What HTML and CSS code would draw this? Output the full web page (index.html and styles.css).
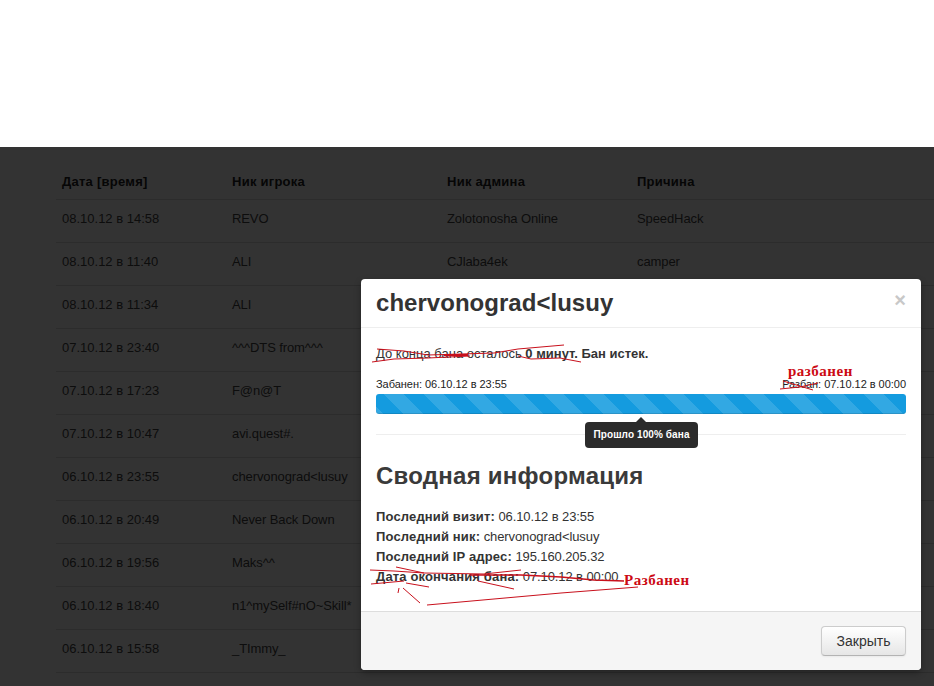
FILE: index.html
```html
<!DOCTYPE html>
<html lang="ru">
<head>
<meta charset="utf-8">
<title>Баны</title>
<link rel="stylesheet" href="styles.css">
</head>
<body>
<div class="top"></div>
<div class="wrap">
<table class="bans">
<thead><tr><th class="c1">Дата [время]</th><th class="c2">Ник игрока</th><th class="c3">Ник админа</th><th>Причина</th></tr></thead>
<tbody>
<tr><td>08.10.12 в 14:58</td><td>REVO</td><td>Zolotonosha Online</td><td>SpeedHack</td></tr>
<tr><td>08.10.12 в 11:40</td><td>ALI</td><td>CJlaba4ek</td><td>camper</td></tr>
<tr><td>08.10.12 в 11:34</td><td>ALI</td><td></td><td></td></tr>
<tr><td>07.10.12 в 23:40</td><td>^^^DTS from^^^</td><td></td><td></td></tr>
<tr><td>07.10.12 в 17:23</td><td>F@n@T</td><td></td><td></td></tr>
<tr><td>07.10.12 в 10:47</td><td>avi.quest#.</td><td></td><td></td></tr>
<tr><td>06.10.12 в 23:55</td><td>chervonograd&lt;lusuy</td><td></td><td></td></tr>
<tr><td>06.10.12 в 20:49</td><td>Never Back Down</td><td></td><td></td></tr>
<tr><td>06.10.12 в 19:56</td><td>Maks^^</td><td></td><td></td></tr>
<tr><td>06.10.12 в 18:40</td><td>n1^mySelf#nO~Skill*</td><td></td><td></td></tr>
<tr><td>06.10.12 в 15:58</td><td>_TImmy_</td><td></td><td></td></tr>
</tbody>
</table>
</div>
<div class="backdrop"></div>
<div class="modal">
  <div class="modal-head"><h3>chervonograd&lt;lusuy</h3><span class="close">×</span></div>
  <div class="modal-body">
    <p class="status">До конца бана осталось <b>0 минут. Бан истек.</b></p>
    <div class="dates"><span>Забанен: 06.10.12 в 23:55</span><span>Разбан: 07.10.12 в 00:00</span></div>
    <div class="progress"></div>
    <div class="tip">Прошло 100% бана</div>
    <hr class="rule">
    <h2>Сводная информация</h2>
    <p class="info"><b>Последний визит:</b> 06.10.12 в 23:55</p>
    <p class="info"><b>Последний ник:</b> chervonograd&lt;lusuy</p>
    <p class="info"><b>Последний IP адрес:</b> 195.160.205.32</p>
    <p class="info"><b>Дата окончания бана:</b> 07.10.12 в 00:00</p>
  </div>
  <div class="modal-foot"><button class="btn">Закрыть</button></div>
</div>
<svg class="scribble" width="934" height="686" viewBox="0 0 934 686" fill="none" stroke="#c8101c" stroke-width="1">
  <path d="M377 349 L404 351 L428 355 L494 353 L518 349 L564 345"/>
  <path d="M372 362 L394 359 L428 358 L470 356"/>
  <path d="M518 356 L531 359 L560 358 L581 362"/>
  <path d="M444 355 L468 355" stroke-width="2"/>
  <path d="M783 381 L813 390 M780 389 L800 387 L818 383"/>
  <path d="M370 570 L394 571 L424 573 L484 574 L521 570"/>
  <path d="M396 567 L424 573"/>
  <path d="M470 575 L521 575 L561 577 L594 580 L624 581" stroke-width="1.5"/>
  <path d="M478 581 L514 589"/>
  <path d="M371 584 L404 581 M406 583 L429 587"/>
  <path d="M398 593 L399 588 M403 588 L420 603"/>
  <path d="M427 605 L561 593 L638 587"/>
</svg>
<div class="note note-a">разбанен</div>
<div class="note note-b">Разбанен</div>
</body>
</html>
```
FILE: styles.css
```css
* { box-sizing: border-box; }
html, body { margin: 0; padding: 0; }
body { width: 934px; height: 686px; overflow: hidden; background: #fff; font-family: "Liberation Sans", Arial, sans-serif; font-size: 13px; color: #333; position: relative; }
.top { height: 147px; }
.wrap { padding: 13px 0 0 56px; }
.bans { border-collapse: collapse; width: 878px; table-layout: fixed; }
.bans th, .bans td { text-align: left; padding: 0 6px; border-bottom: 1px solid #ddd; }
.bans th { height: 39px; padding-top: 4px; font-weight: bold; letter-spacing: .25px; color: #222; }
.bans td { height: 43px; padding-bottom: 4px; color: #444; }
.bans td + td { letter-spacing: -.1px; }
.c1 { width: 170px; }
.c2 { width: 215px; }
.c3 { width: 190px; }
.backdrop { position: absolute; inset: 147px 0 0 0; background: rgba(0,0,0,.8); }
.modal { position: absolute; left: 361px; top: 279px; width: 560px; height: 391px; background: #fff; border-radius: 4px; display: flex; flex-direction: column; box-shadow: 0 3px 7px rgba(0,0,0,.3); }
.modal-head { height: 49px; padding: 9px 15px 0; border-bottom: 1px solid #eee; display: flex; justify-content: space-between; }
.modal-head h3 { margin: 0; font-size: 24px; line-height: 30px; font-weight: bold; letter-spacing: .03px; color: #333; }
.close { font-size: 20px; font-weight: bold; line-height: 24px; color: #c8c8c8; }
.modal-body { flex: 1; padding: 16px 15px 0; position: relative; }
.status { margin: 0; line-height: 20px; }
.dates { display: flex; justify-content: space-between; font-size: 11px; line-height: 14px; margin-top: 13px; color: #222; letter-spacing: -.03px; }
.progress { height: 20px; margin-top: 3px; border-radius: 3px; background-color: #149bdf; background-image: linear-gradient(45deg, rgba(255,255,255,.13) 25%, transparent 25%, transparent 50%, rgba(255,255,255,.13) 50%, rgba(255,255,255,.13) 75%, transparent 75%); background-size: 40px 40px; background-position: 8px 0; box-shadow: inset 0 -1px 0 rgba(0,0,0,.12); }
.tip { position: absolute; left: 224px; top: 94px; width: 113px; height: 26px; background: #2b2b2b; color: #fff; font-size: 10px; font-weight: bold; line-height: 26px; letter-spacing: .1px; text-align: center; border-radius: 4px; }
.tip::before { content: ""; position: absolute; left: 51px; top: -5px; border: 5px solid transparent; border-top: 0; border-bottom-color: #2b2b2b; }
.rule { border: 0; border-top: 1px solid #eee; margin: 20px 0 0; }
.modal-body h2 { margin: 21px 0 0; font-size: 24px; line-height: 40px; font-weight: bold; letter-spacing: .25px; color: #3a3a3a; }
.info { margin: 0; line-height: 20px; letter-spacing: -.1px; }
.info b { letter-spacing: .15px; }
.modal-body h2 + .info { margin-top: 11px; }
.modal-foot { height: 59px; background: #f5f5f5; border-top: 1px solid #ddd; border-radius: 0 0 4px 4px; padding: 14px 15px 0; display: flex; justify-content: flex-end; align-items: flex-start; }
.btn { width: 85px; height: 30px; font: 14px/20px "Liberation Sans", Arial, sans-serif; color: #333; background: linear-gradient(#fff, #e6e6e6); border: 1px solid #ccc; border-bottom-color: #b3b3b3; border-radius: 4px; box-shadow: inset 0 1px 0 rgba(255,255,255,.2), 0 1px 2px rgba(0,0,0,.05); }
.scribble { position: absolute; left: 0; top: 0; pointer-events: none; }
.note { position: absolute; font-family: "Liberation Serif", serif; font-weight: bold; color: #cc0a14; font-size: 15px; line-height: 18px; letter-spacing: .5px; }
.note-a { left: 788px; top: 362px; }
.note-b { left: 624px; top: 571px; }
```
